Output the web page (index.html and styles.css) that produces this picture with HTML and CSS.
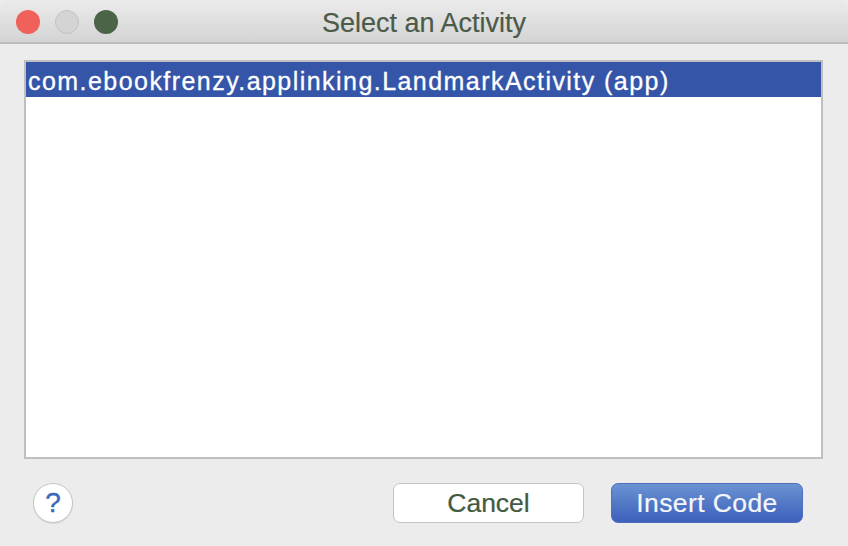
FILE: index.html
```html
<!DOCTYPE html>
<html>
<head>
<meta charset="utf-8">
<link rel="stylesheet" href="styles.css">
</head>
<body>
<div class="window">
  <div class="titlebar">
    <div class="lights">
      <span class="light red"></span>
      <span class="light gray"></span>
      <span class="light green"></span>
    </div>
    <div class="title">Select an Activity</div>
  </div>
  <div class="content">
    <div class="list">
      <div class="row selected">com.ebookfrenzy.applinking.LandmarkActivity (app)</div>
    </div>
    <div class="footer">
      <button class="help">?</button>
      <div class="actions">
        <button class="btn cancel">Cancel</button>
        <button class="btn primary">Insert Code</button>
      </div>
    </div>
  </div>
</div>
</body>
</html>
```
FILE: styles.css
```css
html, body {
  margin: 0;
  padding: 0;
  background: #ececec;
}
body {
  font-family: "Liberation Sans", Arial, sans-serif;
  width: 848px;
  height: 546px;
  overflow: hidden;
}
.window {
  width: 848px;
  height: 546px;
  background: #ececec;
  display: flex;
  flex-direction: column;
}
.titlebar {
  height: 42px;
  background: linear-gradient(#ebebeb, #d4d4d4);
  border-bottom: 2px solid #bcbcbc;
  position: relative;
  display: flex;
  align-items: center;
  justify-content: center;
  border-radius: 8px 8px 0 0;
}
.lights {
  position: absolute;
  left: 16px;
  top: 10px;
  display: flex;
  gap: 15px;
}
.light {
  width: 24px;
  height: 24px;
  border-radius: 50%;
  box-sizing: border-box;
}
.red { background: #f1615b; }
.gray { background: #d4d4d4; border: 1px solid #c2c2c2; }
.green { background: #4b6448; }
.title {
  font-size: 27px;
  color: #4b5a49;
  margin-top: 4px;
  -webkit-text-stroke: 0.2px #4b5a49;
}
.content {
  flex: 1;
  display: flex;
  flex-direction: column;
  padding: 16px 24px 0 24px;
}
.list {
  width: 799px;
  height: 399px;
  box-sizing: border-box;
  background: #fff;
  border: 2px solid #bfbfbf;
}
.row {
  height: 35px;
  box-sizing: border-box;
  padding-top: 3px;
  line-height: 32px;
  font-size: 25px;
  letter-spacing: 1.45px;
  padding-left: 2px;
  white-space: nowrap;
}
.selected {
  background: #3556a8;
  color: #fff;
  -webkit-text-stroke: 0.3px #fff;
}
.footer {
  display: flex;
  align-items: center;
  justify-content: space-between;
  padding: 24px 21px 0 9px;
}
.help {
  width: 40px;
  height: 40px;
  border-radius: 50%;
  background: #fff;
  border: 1px solid #c4c4c4;
  box-shadow: 0 1px 1px rgba(0,0,0,0.08);
  color: #3a66bd;
  font-family: "Liberation Sans", Arial, sans-serif;
  font-size: 28px;
  padding: 0;
  line-height: 38px;
  -webkit-text-stroke: 0.4px #3a66bd;
}
.actions {
  display: flex;
  gap: 27px;
}
.btn {
  width: 192px;
  height: 40px;
  border-radius: 7px;
  font-family: "Liberation Sans", Arial, sans-serif;
  font-size: 26.5px;
  padding: 0;
  box-sizing: border-box;
}
.cancel {
  width: 191px;
  background: #fff;
  border: 1px solid #c4c4c4;
  color: #425a40;
  -webkit-text-stroke: 0.2px #425a40;
}
.primary {
  background: linear-gradient(#6a93d3, #3d5fba);
  border: 1px solid #4d6fbe;
  color: #f4f6fa;
  letter-spacing: 0.4px;
  -webkit-text-stroke: 0.2px #f4f6fa;
}
```
